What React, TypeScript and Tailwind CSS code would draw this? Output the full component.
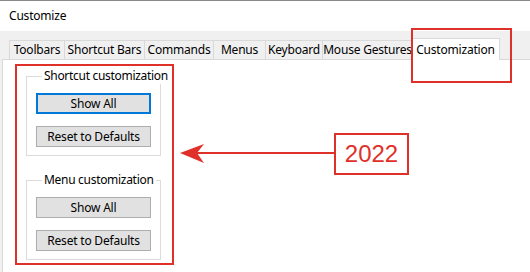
import React from 'react'

const tabs = [
  { label: 'Toolbars', w: 55 },
  { label: 'Shortcut Bars', w: 80 },
  { label: 'Commands', w: 69 },
  { label: 'Menus', w: 52 },
  { label: 'Keyboard', w: 57 },
  { label: 'Mouse Gestures', w: 91 },
]

function Btn({ label, focused }: { label: string; focused?: boolean }) {
  return (
    <button
      type="button"
      className={
        'w-[115px] h-[21px] bg-[#e1e1e1] flex items-center justify-center leading-none ' +
        (focused ? 'border-2 border-[#0078d7]' : 'border border-[#adadad]')
      }
    >
      {label}
    </button>
  )
}

function Group({ title }: { title: string }) {
  return (
    <fieldset className="w-[135px] min-w-0 border border-[#dcdcdc] pl-[9px] pb-[8px] pt-[9px] m-0">
      <legend className="ml-[6px] px-[2px] leading-[16px] whitespace-nowrap tracking-[-0.3px]">{title}</legend>
      <div className="flex flex-col gap-[12px]">
        <Btn label="Show All" focused={title.startsWith('Shortcut')} />
        <Btn label="Reset to Defaults" />
      </div>
    </fieldset>
  )
}

export default function App() {
  return (
    <div className="relative w-[530px] h-[272px] bg-white overflow-hidden text-[12px] tracking-[-0.2px] text-black font-['Noto_Sans',_'Open_Sans',_sans-serif]">
      <div className="h-[31px] border-t border-[#8a8a8a] pl-[9px] pt-[7px] leading-[16px]">Customize</div>

      <div className="h-[28px] bg-[#f0f0f0] flex items-end pl-[9px]">
        {tabs.map((t, i) => (
          <div
            key={t.label}
            style={{ width: t.w }}
            className={
              'h-[19px] shrink-0 border-t border-l border-[#d9d9d9] flex items-center justify-center whitespace-nowrap overflow-hidden ' +
              (i === tabs.length - 1 ? 'border-r' : '')
            }
          >
            {t.label}
          </div>
        ))}
        <div className="relative z-10 -ml-[2px] -mb-px h-[22px] w-[89px] shrink-0 bg-white border-t border-l border-r border-[#d9d9d9] flex items-start justify-center pt-[2px] whitespace-nowrap">
          Customization
        </div>
      </div>

      <div className="flex h-[213px]">
        <div className="w-[2px] bg-[#f0f0f0]" />
        <div className="flex-1 border-l border-t border-[#d9d9d9] bg-white pl-[12px] pt-[4px]">
          <div className="w-[159px] border-2 border-[#e0302a] pl-[9px] pt-[2px] pb-[3px] flex flex-col gap-[16px]">
            <Group title="Shortcut customization" />
            <Group title="Menu customization" />
          </div>
        </div>
      </div>

      {/* annotation overlays */}
      <div className="absolute left-[411px] top-[28px] w-[101px] h-[55px] border-2 border-[#e0302a] z-20" />
      <svg className="absolute left-0 top-0 pointer-events-none z-20" width="530" height="272">
        <line x1="196" y1="153" x2="334" y2="153" stroke="#e0302a" strokeWidth="2" />
        <polygon points="180,153 204,144 197,153 204,163" fill="#e0302a" />
      </svg>
      <div className="absolute left-[334px] top-[133px] w-[75px] h-[42px] border-2 border-[#e0302a] bg-white flex items-center justify-center text-[24px] tracking-normal text-[#e0302a] font-['Liberation_Sans',_Arial,_sans-serif] z-20">
        2022
      </div>
    </div>
  )
}
